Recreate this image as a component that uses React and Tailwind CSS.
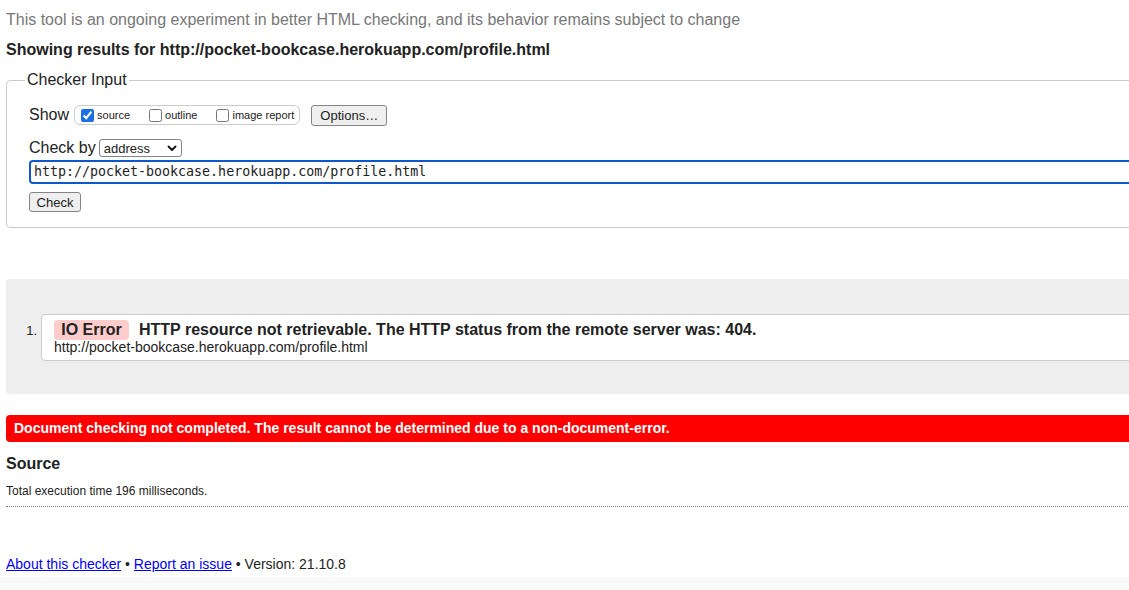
const PAGE_URL = "http://pocket-bookcase.herokuapp.com/profile.html";

function Checkbox({ checked, label }) {
  return (
    <label className="flex items-center">
      <input
        type="checkbox"
        defaultChecked={checked}
        className="m-0 mr-[3px] h-[13px] w-[13px] accent-[#1a6ee6]"
      />
      <span className="text-[11px]">{label}</span>
    </label>
  );
}

function Chevron() {
  return (
    <svg width="10" height="7" viewBox="0 0 10 7" className="ml-auto">
      <path d="M1.5 1.5 L5 5 L8.5 1.5" fill="none" stroke="#111" strokeWidth="1.8" strokeLinecap="round" strokeLinejoin="round" />
    </svg>
  );
}

function CheckerInput() {
  return (
    <fieldset className="mt-[12px] h-[157px] rounded-[4px] border border-[#ccc] pl-[22px]">
      <legend className="-ml-[4px] px-[2px] leading-[18px]">Checker Input</legend>

      <div className="mt-[15px] flex h-[22px] items-center">
        <span className="leading-[18px]">Show</span>
        <div className="ml-[5px] flex h-[20px] items-center gap-[19px] rounded-[6px] border border-[#ccc] pl-[6px] pr-[5px]">
          <Checkbox checked label="source" />
          <Checkbox label="outline" />
          <Checkbox label="image report" />
        </div>
        <button className="ml-[11px] h-[21px] w-[76px] rounded-[3px] border border-[#858585] bg-[#efefef] text-[13px] leading-none">
          Options…
        </button>
      </div>

      <div className="mt-[12px] flex h-[20px] items-center">
        <span className="leading-[18px]">Check by</span>
        <div className="ml-[3px] flex h-[18px] w-[83px] items-center rounded-[3px] border border-[#858585] bg-white pl-[4px] pr-[4px] text-[13px] leading-none">
          address
          <Chevron />
        </div>
      </div>

      <div className="mt-[2px] flex h-[24px] items-center rounded-[4px] border-2 border-[#0d57d0] pl-[3px] font-['DejaVu_Sans_Mono',monospace] text-[13.3px]">
        {PAGE_URL}
      </div>

      <button className="mt-[8px] block h-[20px] w-[52px] rounded-[3px] border border-[#858585] bg-[#efefef] text-[13px] leading-none">
        Check
      </button>
    </fieldset>
  );
}

function Results() {
  return (
    <div className="mt-[51px] rounded-[4px] bg-[#eee] pb-[33px] pt-[35px]">
      <div className="flex">
        <span className="w-[35px] pt-[9px] pr-[4px] text-right text-[13px] leading-[15px]">1.</span>
        <div className="flex-1 rounded-[4px] border border-[#ccc] bg-white pb-[5px] pl-[12px] pt-[5px]">
          <div className="flex items-center">
            <span className="w-[75px] rounded-[4px] bg-[#fcc] text-center font-bold leading-[20px]">IO Error</span>
            <span className="ml-[10px] font-bold leading-[20px]">
              HTTP resource not retrievable. The HTTP status from the remote server was: 404.
            </span>
          </div>
          <p className="text-[14px] leading-[15px]">{PAGE_URL}</p>
        </div>
      </div>
    </div>
  );
}

export default function App() {
  return (
    <div className="h-[590px] w-[1129px] overflow-hidden bg-white font-['Liberation_Sans',Arial,sans-serif] text-[16px] text-[#222]">
      <div className="w-[1200px] pl-[6px]">
        <p className="pt-[11px] leading-[18px] text-[#777]">
          This tool is an ongoing experiment in better HTML checking, and its behavior remains subject to change
        </p>
        <p className="mt-[12px] font-bold leading-[18px]">Showing results for {PAGE_URL}</p>

        <CheckerInput />
        <Results />

        <div className="mt-[21px] flex h-[27px] items-center rounded-[4px] bg-[#f00] pl-[8px] text-[14px] font-bold text-white">
          Document checking not completed. The result cannot be determined due to a non-document-error.
        </div>

        <h2 className="mt-[13px] font-bold leading-[18px]">Source</h2>
        <p className="mt-[11px] text-[12px] leading-[14px]">Total execution time 196 milliseconds.</p>
        <div className="mt-[8px] border-b border-dotted border-[#777]" />

        <p className="mt-[49px] text-[14px] leading-[16px]">
          <a href="#" className="text-[#00e] underline">About this checker</a>
          {" • "}
          <a href="#" className="text-[#00e] underline">Report an issue</a>
          {" • Version: 21.10.8"}
        </p>
      </div>
      <div className="mt-[5px] h-[40px] bg-[#fafafa]" />
    </div>
  );
}
